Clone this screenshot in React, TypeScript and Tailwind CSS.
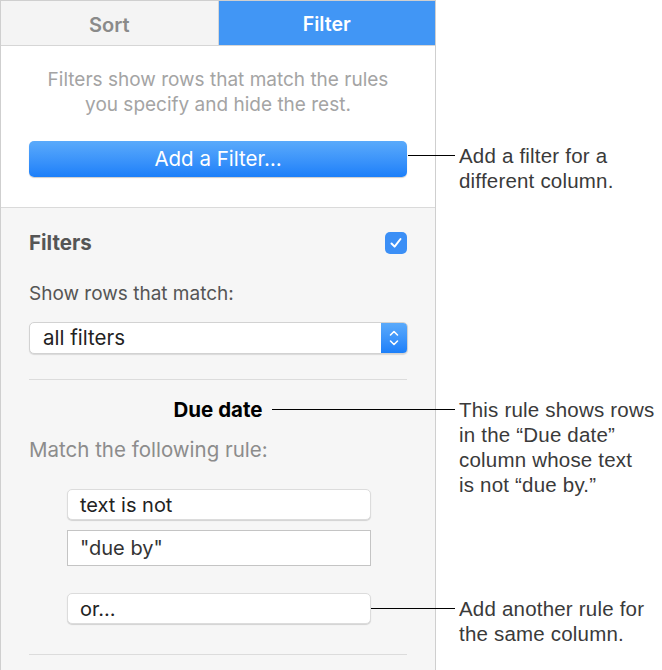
import type { ReactNode } from 'react'

const SANS = "font-['Inter','Liberation_Sans',sans-serif]"
const NOTE = "font-['Liberation_Sans','Helvetica',sans-serif]"

/** Leader line + label pointing at something in the panel. */
function Callout({
  top,
  from,
  children,
}: {
  top: number
  from: number
  children: ReactNode
}) {
  return (
    <div className="absolute flex items-start" style={{ top, left: from }}>
      <div className="mt-[12px] h-px bg-black" style={{ width: 455 - from }} />
      <p className={`${NOTE} ml-[4px] w-[205px] text-[20.5px] leading-[25px] tracking-[0.2px] text-[#3a3a3a]`}>
        {children}
      </p>
    </div>
  )
}

function Field({ children, square = false }: { children: ReactNode; square?: boolean }) {
  return (
    <div
      className={
        square
          ? 'flex h-[36px] w-[304px] items-center border border-[#c4c4c4] bg-white px-[12px] text-[20px] text-[#333]'
          : 'flex h-[31px] w-[304px] items-center rounded-[5px] border border-[#dcdcdc] bg-white px-[12px] text-[20px] text-[#222] shadow-[0_1px_1px_rgba(0,0,0,0.15)]'
      }
    >
      {children}
    </div>
  )
}

export default function App() {
  return (
    <div className={`${SANS} relative h-[670px] w-[662px] overflow-hidden bg-white`}>
      <div className="flex h-full w-[436px] flex-col border-x border-t border-[#cfcfcf] bg-[#f6f6f6]">
        {/* Tabs */}
        <div className="flex h-[45px] shrink-0 border-b border-[#d6d6d6]">
          <div className="flex flex-1 items-center justify-center border-r border-[#d6d6d6] bg-[#f4f4f4] pt-[3px] text-[20px] font-semibold text-[#8a8a8a]">
            Sort
          </div>
          <div className="flex flex-1 items-center justify-center bg-[#4196f5] pt-[3px] text-[19.5px] font-semibold text-white">
            Filter
          </div>
        </div>

        {/* Intro */}
        <div className="flex shrink-0 flex-col items-center border-b border-[#dadada] bg-white px-4 pb-[30px] pt-[21px]">
          <p className="text-center text-[19px] leading-[25px] text-[#a4a4a4]">
            Filters show rows that match the rules
            <br />
            you specify and hide the rest.
          </p>
          <button
            type="button"
            className="mt-[24px] h-[36px] w-[378px] rounded-[5px] bg-gradient-to-b from-[#5aaafb] to-[#1b7ff9] text-[20.5px] text-white shadow-[0_1px_1px_rgba(0,0,0,0.2)]"
          >
            Add a Filter…
          </button>
        </div>

        {/* Filters */}
        <div className="flex flex-col px-7">
          <div className="mt-[23px] flex h-[24px] items-center justify-between">
            <span className="text-[20.5px] font-bold text-[#555]">Filters</span>
            <span className="flex h-[22px] w-[22px] items-center justify-center rounded-[5px] bg-[#3b8ff6]">
              <svg width="14" height="14" viewBox="0 0 14 14" fill="none">
                <path d="M2.5 7.5 L5.6 10.6 L11.5 3" stroke="white" strokeWidth="2" strokeLinecap="round" strokeLinejoin="round" />
              </svg>
            </span>
          </div>
          <p className="mt-[27px] h-[24px] text-[19px] leading-[24px] text-[#555]">
            Show rows that match:
          </p>
          <div className="mt-[16px] flex h-[32px] w-[379px] overflow-hidden rounded-[5px] border border-[#d2d2d2] bg-white shadow-[0_1px_1px_rgba(0,0,0,0.12)]">
            <span className="flex flex-1 items-center pl-[13px] text-[20.5px] text-[#222]">all filters</span>
            <span className="flex w-[26px] items-center justify-center bg-gradient-to-b from-[#5aaafb] to-[#1b7ff9]">
              <svg width="12" height="20" viewBox="0 0 12 20" fill="none">
                <path d="M2.5 7 L6 3.5 L9.5 7 M2.5 13 L6 16.5 L9.5 13" stroke="white" strokeWidth="1.6" strokeLinecap="round" strokeLinejoin="round" />
              </svg>
            </span>
          </div>
          <div className="mt-[25px] h-px bg-[#dcdcdc]" />
          <p className="mt-[18px] h-[24px] text-center text-[20.5px] font-bold leading-[24px] text-black">
            Due date
          </p>
          <p className="mt-[16px] h-[24px] text-[20.5px] leading-[24px] text-[#8c8c8c]">
            Match the following rule:
          </p>
          <div className="ml-[38px] flex flex-col">
            <div className="mt-[27px]">
              <Field>text is not</Field>
            </div>
            <div className="mt-[10px]">
              <Field square>"due by"</Field>
            </div>
            <div className="mt-[27px]">
              <Field>or…</Field>
            </div>
          </div>
          <div className="mt-[30px] h-px bg-[#dcdcdc]" />
        </div>
      </div>

      <Callout top={143} from={408}>
        Add a filter for a
        <br />
        different column.
      </Callout>
      <Callout top={397} from={272}>
        This rule shows rows
        <br />
        in the “Due date”
        <br />
        column whose text
        <br />
        is not “due by.”
      </Callout>
      <Callout top={596} from={371}>
        Add another rule for
        <br />
        the same column.
      </Callout>
    </div>
  )
}
